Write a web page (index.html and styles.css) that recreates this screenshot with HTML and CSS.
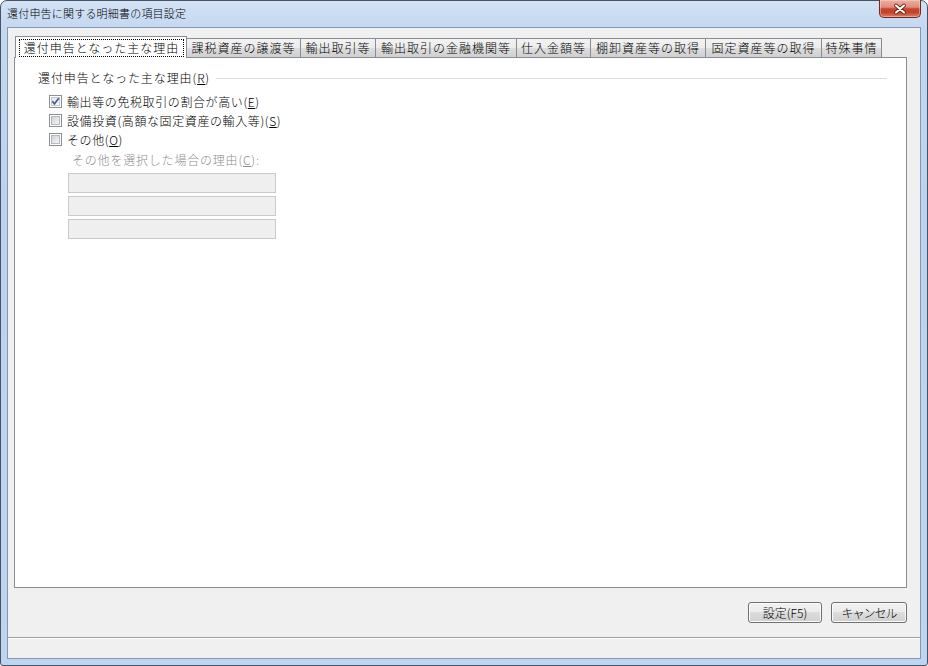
FILE: index.html
```html
<!DOCTYPE html>
<html lang="ja">
<head>
<meta charset="utf-8">
<title>還付申告に関する明細書の項目設定</title>
<link rel="stylesheet" href="styles.css">
</head>
<body>
<div class="window">
  <div class="titlebar">
    <span class="title">還付申告に関する明細書の項目設定</span>
    <div class="close">
      <svg width="40" height="16" viewBox="0 0 40 16">
        <path d="M16 4.5 L24 11.5 M24 4.5 L16 11.5" stroke="#6a2516" stroke-width="3.8" stroke-linecap="round" fill="none"/>
        <path d="M16 4.5 L24 11.5 M24 4.5 L16 11.5" stroke="#ffffff" stroke-width="2" stroke-linecap="round" fill="none"/>
      </svg>
    </div>
  </div>
  <div class="client">
    <div class="tabs">
      <div class="tab selected t1"><span class="focus">還付申告となった主な理由</span></div>
      <div class="tab t2">課税資産の譲渡等</div>
      <div class="tab t3">輸出取引等</div>
      <div class="tab t4">輸出取引の金融機関等</div>
      <div class="tab t5">仕入金額等</div>
      <div class="tab t6">棚卸資産等の取得</div>
      <div class="tab t7">固定資産等の取得</div>
      <div class="tab t8">特殊事情</div>
    </div>
    <div class="panel">
      <div class="group-head">
        <span class="group-title">還付申告となった主な理由(<u>R</u>)</span>
        <div class="rule"></div>
      </div>
      <div class="checks">
        <div class="check">
          <span class="box"><span class="box-inner checked">
            <svg width="9" height="9" viewBox="0 0 9 9"><path d="M1.3 4.3 L3.4 6.8 L7.8 1.2" stroke="#4a5d92" stroke-width="1.7" fill="none"/></svg>
          </span></span>
          <span class="check-label">輸出等の免税取引の割合が高い(<u>E</u>)</span>
        </div>
        <div class="check">
          <span class="box"><span class="box-inner"></span></span>
          <span class="check-label">設備投資(高額な固定資産の輸入等)(<u>S</u>)</span>
        </div>
        <div class="check">
          <span class="box"><span class="box-inner"></span></span>
          <span class="check-label">その他(<u>O</u>)</span>
        </div>
      </div>
      <div class="other">
        <div class="sub-label">その他を選択した場合の理由(<u>C</u>):</div>
        <div class="inputs">
          <div class="input"></div>
          <div class="input"></div>
          <div class="input"></div>
        </div>
      </div>
    </div>
    <div class="buttons">
      <button class="btn b-set">設定(F5)</button>
      <button class="btn b-cancel">キャンセル</button>
    </div>
    <div class="status"></div>
  </div>
</div>
</body>
</html>
```
FILE: styles.css
```css
* { box-sizing: border-box; }

body {
  margin: 0;
  background: #ffffff;
  font-family: "Noto Sans CJK JP", "Noto Sans", sans-serif;
  font-size: 12px;
  font-weight: 300;
  color: #000;
}

.window {
  width: 928px;
  height: 666px;
  border: 1px solid #4a5262;
  border-radius: 7px 7px 3px 3px;
  background: linear-gradient(#d3e3f6 0px, #c4d8f0 26px, #bcd2ee 200px, #bfd4ee 666px);
  display: flex;
  flex-direction: column;
}

.titlebar {
  height: 26px;
  display: flex;
  justify-content: space-between;
  align-items: flex-start;
}

.title {
  padding: 4px 0 0 6px;
  font-size: 11px;
  line-height: 16px;
  letter-spacing: 0.2px;
  color: #000;
}

.close {
  width: 42px;
  height: 18px;
  margin: -1px 6px 0 0;
  border: 1px solid #6e2c20;
  border-top: none;
  border-radius: 0 0 5px 5px;
  background: linear-gradient(#eab1a3 0%, #df8d7b 42%, #c9452f 52%, #c4412a 72%, #dc7e66 100%);
  box-shadow: inset 0 0 0 1px rgba(255, 220, 210, 0.45);
  display: flex;
  align-items: center;
  justify-content: center;
}

.close svg { display: block; }

.client {
  flex: 1;
  margin: 0 6px 6px 6px;
  border: 1px solid #8398b5;
  background: #f0f0f0;
  display: flex;
  flex-direction: column;
}

/* ---------- tabs ---------- */
.tabs {
  height: 29px;
  padding: 8px 0 0 7px;
  display: flex;
  align-items: flex-end;
}

.tab {
  height: 19px;
  margin-left: -1px;
  border: 1px solid #898c95;
  border-bottom: none;
  background: linear-gradient(#f3f3f3 0%, #ebebeb 50%, #dedede 50%, #d0d0d0 100%);
  display: flex;
  align-items: center;
  justify-content: center;
  line-height: 14px;
  letter-spacing: 1px;
  white-space: nowrap;
}

.tab.selected {
  height: 22px;
  margin-left: 0;
  margin-bottom: -1px;
  padding: 2px 2px 1px 3px;
  background: #ffffff;
  align-items: stretch;
  position: relative;
  z-index: 1;
}

.focus {
  flex: 1;
  border: 1px dotted #000;
  display: flex;
  align-items: center;
  justify-content: center;
}

.t1 { width: 172px; }
.t2 { width: 115px; }
.t3 { width: 76px; }
.t4 { width: 142px; }
.t5 { width: 75px; }
.t6 { width: 116px; }
.t7 { width: 117px; }
.t8 { width: 61px; }

/* ---------- panel ---------- */
.panel {
  flex: 1;
  margin: 0 13px 0 6px;
  border: 1px solid #898c95;
  background: #ffffff;
  padding: 12px 19px 0 23px;
}

.group-head {
  display: flex;
  align-items: center;
  height: 16px;
  line-height: 16px;
}

.group-title {
  letter-spacing: 0.9px;
  white-space: nowrap;
}

.rule {
  flex: 1;
  height: 1px;
  margin-left: 6px;
  background: #d5dfe5;
}

.checks {
  margin-top: 6px;
  margin-left: 11px;
}

.check {
  height: 19px;
  display: flex;
  align-items: center;
  gap: 5px;
}

.check-label {
  line-height: 16px;
  letter-spacing: 0.6px;
  white-space: nowrap;
}

.box {
  width: 13px;
  height: 13px;
  border: 1px solid #8e8f8f;
  background: #ffffff;
  padding: 1px;
  display: block;
}

.box-inner {
  display: block;
  width: 9px;
  height: 9px;
  border: 1px solid #b4b9be;
  background: linear-gradient(135deg, #cfd3d8 0%, #e6e8ea 60%, #f5f5f5 100%);
}

.box-inner.checked {
  border-color: #c4c8cc;
  background: linear-gradient(135deg, #e2e5e8 0%, #f2f3f4 60%, #fafafa 100%);
}

.box-inner svg {
  display: block;
  margin: -1px 0 0 -1px;
}

.other {
  margin-left: 30px;
}

.sub-label {
  margin-top: 3px;
  padding-left: 4px;
  line-height: 16px;
  color: #8c8c8c;
  letter-spacing: 0.8px;
  white-space: nowrap;
}

.inputs {
  margin-top: 5px;
  display: flex;
  flex-direction: column;
  gap: 3px;
}

.input {
  width: 208px;
  height: 20px;
  border: 1px solid #cacaca;
  background: #efefef;
}

/* ---------- buttons ---------- */
.buttons {
  height: 21px;
  margin: 14px 13px 0 0;
  display: flex;
  justify-content: flex-end;
  gap: 9px;
}

.btn {
  height: 21px;
  padding: 0;
  border: 1px solid #707070;
  border-radius: 3px;
  background: linear-gradient(#f2f2f2 0%, #ebebeb 50%, #dddddd 50%, #cfcfcf 100%);
  box-shadow: inset 0 0 0 1px #fbfbfb;
  font-family: "Noto Sans CJK JP", "Noto Sans", sans-serif;
  font-size: 12px;
  font-weight: 300;
  line-height: 17px;
  color: #000;
}

.b-set { width: 74px; }
.b-cancel { width: 76px; letter-spacing: -1px; }

/* ---------- status ---------- */
.status {
  height: 21px;
  margin-top: 14px;
  border-top: 1px solid #a0a0a0;
  box-shadow: inset 0 1px 0 #ffffff;
  background: #f0f0f0;
}
```
